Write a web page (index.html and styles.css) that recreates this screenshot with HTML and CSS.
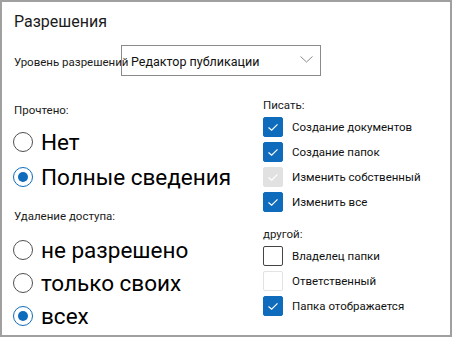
FILE: index.html
```html
<!DOCTYPE html>
<html lang="ru">
<head>
  <meta charset="UTF-8">
  <title>Разрешения</title>
  <link rel="stylesheet" href="styles.css">
</head>
<body>
  <div class="panel">
    <h1 class="title">Разрешения</h1>

    <div class="level-row">
      <span class="level-label">Уровень разрешений</span>
      <div class="select">
        <span>Редактор публикации</span>
        <svg class="chevron" width="13" height="7" viewBox="0 0 13 7">
          <path d="M0.5 0.5 L6.5 6 L12.5 0.5" fill="none" stroke="#8a8a8a" stroke-width="1"/>
        </svg>
      </div>
    </div>

    <div class="columns">
      <!-- Левая колонка -->
      <div class="col-left">
        <div class="group-label">Прочтено:</div>
        <div class="radio-group read">
          <div class="radio-row"><span class="radio"></span><span>Нет</span></div>
          <div class="radio-row"><span class="radio checked"></span><span>Полные сведения</span></div>
        </div>

        <div class="group-label delete-label">Удаление доступа:</div>
        <div class="radio-group remove">
          <div class="radio-row"><span class="radio"></span><span>не разрешено</span></div>
          <div class="radio-row"><span class="radio"></span><span>только своих</span></div>
          <div class="radio-row"><span class="radio checked"></span><span>всех</span></div>
        </div>
      </div>

      <!-- Правая колонка -->
      <div class="col-right">
        <div class="group-label">Писать:</div>
        <div class="check-group">
          <div class="check-row"><span class="box checked"><svg viewBox="0 0 20 20"><path d="M5 10.5 L8.5 13.5 L15 7"/></svg></span><span>Создание документов</span></div>
          <div class="check-row"><span class="box checked"><svg viewBox="0 0 20 20"><path d="M5 10.5 L8.5 13.5 L15 7"/></svg></span><span>Создание папок</span></div>
          <div class="check-row"><span class="box disabled-checked"><svg viewBox="0 0 20 20"><path d="M5 10.5 L8.5 13.5 L15 7"/></svg></span><span>Изменить собственный</span></div>
          <div class="check-row"><span class="box checked"><svg viewBox="0 0 20 20"><path d="M5 10.5 L8.5 13.5 L15 7"/></svg></span><span>Изменить все</span></div>
        </div>

        <div class="group-label other-label">другой:</div>
        <div class="check-group">
          <div class="check-row"><span class="box"></span><span>Владелец папки</span></div>
          <div class="check-row"><span class="box disabled"></span><span>Ответственный</span></div>
          <div class="check-row"><span class="box checked"><svg viewBox="0 0 20 20"><path d="M5 10.5 L8.5 13.5 L15 7"/></svg></span><span>Папка отображается</span></div>
        </div>
      </div>
    </div>
  </div>
</body>
</html>
```

FILE: styles.css
```css
body {
  margin: 0;
  font-family: Roboto, 'Noto Sans', sans-serif;
  color: #1b1b1b;
  background: #fff;
}

.panel {
  width: 452px;
  height: 337px;
  box-sizing: border-box;
  border: 2px solid #a0a0a0;
  padding: 10px 12px 0 12px;
  overflow: hidden;
}

.title {
  margin: 0;
  font-size: 16px;
  font-weight: normal;
  line-height: 20px;
}

.level-row {
  display: flex;
  align-items: center;
  margin-top: 13px;
}

.level-label {
  width: 107px;
  flex-shrink: 0;
  font-size: 11.5px;
  white-space: nowrap;
  padding-top: 3px;
}

.select {
  width: 200px;
  height: 31px;
  box-sizing: border-box;
  border: 1px solid #8a8a8a;
  display: flex;
  align-items: center;
  justify-content: space-between;
  padding: 2px 7px 0 9px;
  font-size: 12.5px;
  color: #111;
}

.chevron {
  margin-top: -4px;
}

.columns {
  display: grid;
  grid-template-columns: 249px 1fr;
  margin-top: 21px;
}

.col-left {
  padding-top: 5px;
}

.group-label {
  font-size: 11.5px;
  line-height: 16px;
}

.delete-label {
  margin-top: 14px;
}

.other-label {
  margin-top: 12px;
}

.radio-group.read {
  margin-top: 6px;
}

.radio-group.read .radio-row {
  height: 35px;
}

.radio-group.remove {
  margin-top: 9px;
}

.radio-group.remove .radio-row {
  height: 33px;
}

.radio-row {
  display: flex;
  align-items: center;
  font-size: 22.5px;
  color: #000;
}

.radio {
  width: 20px;
  height: 20px;
  box-sizing: border-box;
  border: 1px solid #505050;
  border-radius: 50%;
  margin-left: -1px;
  margin-right: 8px;
  flex-shrink: 0;
  position: relative;
}

.radio.checked {
  border-color: #0f6cbd;
}

.radio.checked::after {
  content: '';
  position: absolute;
  left: 4px;
  top: 4px;
  width: 10px;
  height: 10px;
  border-radius: 50%;
  background: #0f6cbd;
}

.check-group {
  margin-top: 1px;
}

.check-row {
  display: flex;
  align-items: center;
  height: 25px;
  font-size: 11.5px;
  color: #111;
}

.box {
  width: 20px;
  height: 20px;
  box-sizing: border-box;
  border: 1px solid #444;
  border-radius: 2px;
  margin-right: 9px;
  flex-shrink: 0;
}

.box svg {
  display: block;
  width: 18px;
  height: 18px;
}

.box path {
  fill: none;
  stroke: #fff;
  stroke-width: 1.3;
}

.box.checked {
  background: #0f6cbd;
  border-color: #0f6cbd;
}

.box.disabled-checked {
  background: #e1e1e1;
  border-color: #e1e1e1;
}

.box.disabled {
  border-color: #e3e3e3;
}
```
